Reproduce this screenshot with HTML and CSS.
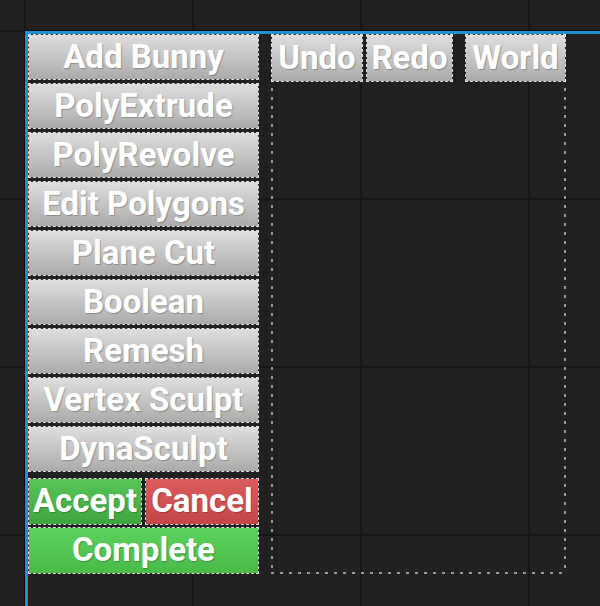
FILE: index.html
```html
<!DOCTYPE html>
<html lang="en">
<head>
<meta charset="UTF-8" />
<title>Modeling Tools – Widget Designer</title>
<meta name="viewport" content="width=device-width, initial-scale=1" />
<link rel="stylesheet" href="styles.css">
</head>
<body>
  <!-- DESIGN SURFACE -->
  <div class="canvas">

    <!-- TOOL COLUMN -->
    <div class="tools">
      <button class="btn">Add Bunny</button>
      <button class="btn">PolyExtrude</button>
      <button class="btn">PolyRevolve</button>
      <button class="btn">Edit Polygons</button>
      <button class="btn">Plane Cut</button>
      <button class="btn">Boolean</button>
      <button class="btn">Remesh</button>
      <button class="btn">Vertex Sculpt</button>
      <button class="btn">DynaSculpt</button>

      <div class="actions">
        <div class="action-row">
          <button class="btn btn-accept">Accept</button>
          <button class="btn btn-cancel">Cancel</button>
        </div>
        <button class="btn btn-complete">Complete</button>
      </div>
    </div>

    <!-- VIEWPORT OVERLAY -->
    <div class="viewport">
      <div class="viewport-bar">
        <button class="btn btn-undo">Undo</button>
        <button class="btn btn-redo">Redo</button>
        <button class="btn btn-world">World</button>
      </div>
    </div>

  </div>
</body>
</html>
```

FILE: styles.css
```css
:root {
  --bg: #212121;
  --grid-major: #161616;
  --grid-minor: #1d1d1d;
  --select: #1e8ed6;
  --font: Roboto, 'Liberation Sans', sans-serif;
}

* {
  box-sizing: border-box;
}

html,
body {
  margin: 0;
  padding: 0;
  height: 606px;
  overflow: hidden;
}

body {
  background-color: var(--bg);
  background-image:
    linear-gradient(90deg, var(--grid-major) 2px, transparent 2px),
    linear-gradient(var(--grid-major) 2px, transparent 2px),
    linear-gradient(90deg, var(--grid-minor) 1px, transparent 1px),
    linear-gradient(var(--grid-minor) 1px, transparent 1px);
  background-size: 168px 168px, 168px 168px, 10.5px 10.5px, 10.5px 10.5px;
  background-position: 24px 30px, 24px 30px, 24px 30px, 24px 30px;
  font-family: var(--font);
}

/* ------------ CANVAS ------------- */
.canvas {
  margin: 31px 0 0 25px;
  height: 575px;
  border-top: 3px solid var(--select);
  border-left: 3px solid var(--select);
  box-shadow: -1px -1px 0 #0b0b0b;
  display: flex;
  align-items: flex-start;
  gap: 12px;
}

/* ------------ BUTTONS ------------- */
.btn {
  display: flex;
  align-items: center;
  justify-content: center;
  height: 46px;
  padding: 0 0 2px;
  margin: 0;
  border: 1px dashed rgba(255, 255, 255, 0.85);
  background: linear-gradient(#dedede, #ababab);
  background-clip: padding-box;
  color: #fff;
  font-family: var(--font);
  font-weight: 700;
  font-size: 33px;
  line-height: 1;
  white-space: nowrap;
  text-shadow: 1px 1px 1px rgba(0, 0, 0, 0.25);
  cursor: pointer;
}

.btn-accept { background: linear-gradient(#58c658, #3fa53f); background-clip: padding-box; }
.btn-cancel { background: linear-gradient(#dc5c5c, #c44747); background-clip: padding-box; }
.btn-complete { background: linear-gradient(#5ed25e, #47ba47); background-clip: padding-box; }

/* ------------ TOOL COLUMN ------------- */
.tools {
  width: 231px;
  display: flex;
  flex-direction: column;
  gap: 3px;
}

.actions {
  margin-top: 3px;
  display: flex;
  flex-direction: column;
  gap: 2px;
}
.actions .btn { height: 47px; }

.action-row {
  display: flex;
  gap: 3px;
}
.action-row .btn { flex: 1; }

/* ------------ VIEWPORT ------------- */
.viewport {
  width: 295px;
  height: 540px;
  background:
    repeating-linear-gradient(90deg, #9a9a9a 0 3px, transparent 3px 9px) left bottom / 100% 2px no-repeat,
    repeating-linear-gradient(180deg, #9a9a9a 0 3px, transparent 3px 9px) left top / 2px 100% no-repeat,
    repeating-linear-gradient(180deg, #9a9a9a 0 3px, transparent 3px 9px) right top / 2px 100% no-repeat;
}

.viewport-bar {
  display: flex;
}
.viewport-bar .btn { height: 48px; }
.btn-undo { width: 92px; }
.btn-redo { width: 87px; margin-left: 3px; }
.btn-world { width: 101px; margin-left: auto; }
```
